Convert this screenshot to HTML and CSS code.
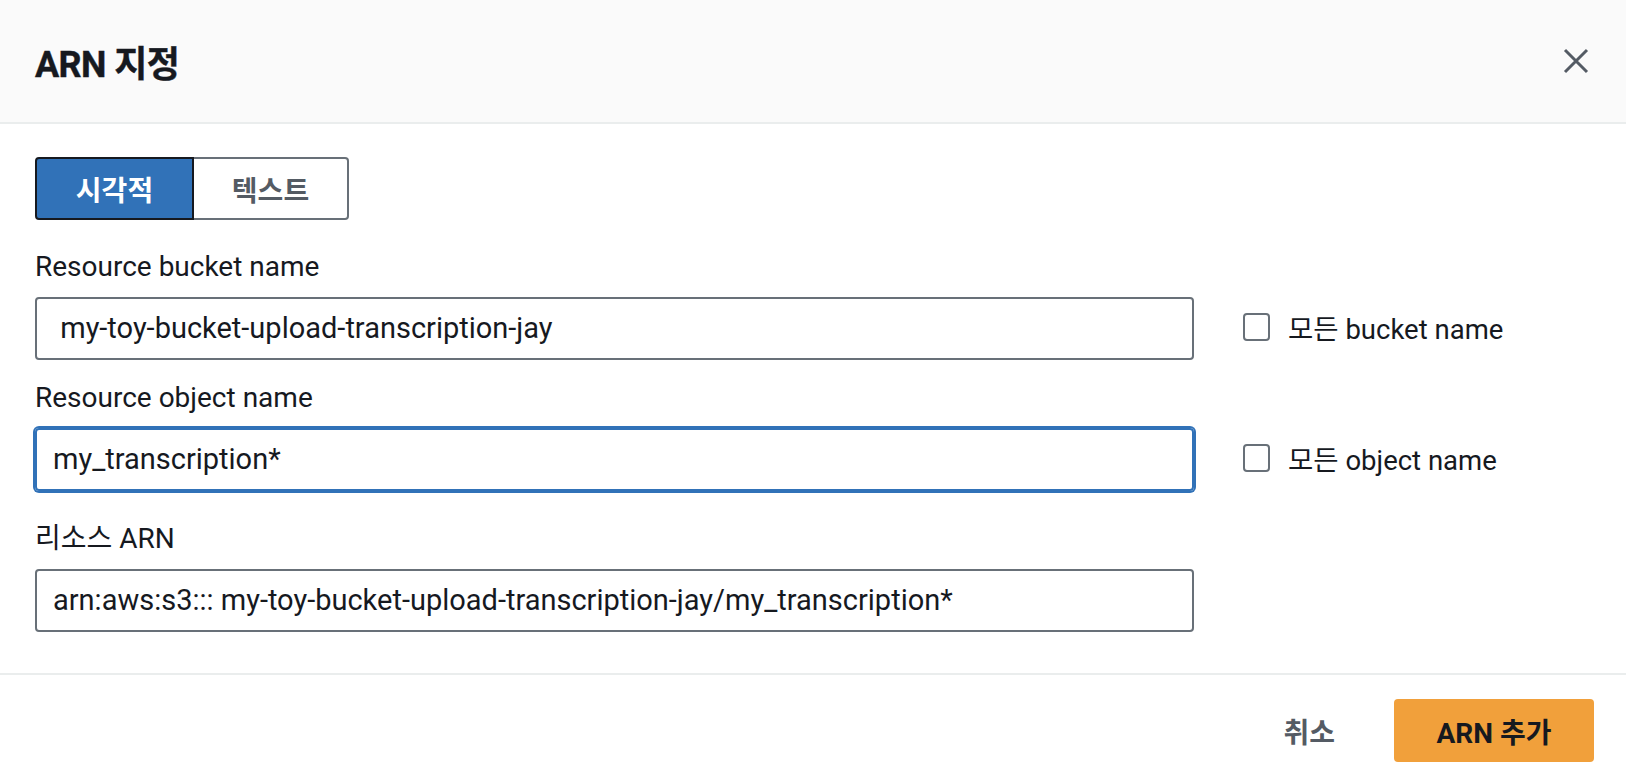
FILE: index.html
```html
<!DOCTYPE html>
<html lang="ko">
<head>
<meta charset="utf-8">
<title>ARN 지정</title>
<link rel="stylesheet" href="styles.css">
</head>
<body>
<div class="modal">
  <header class="hd">
    <h2 class="title">ARN 지정</h2>
    <button class="close" aria-label="닫기">
      <svg width="26" height="26" viewBox="0 0 26 26"><path d="M2 2 L24 24 M24 2 L2 24" stroke="#545b64" stroke-width="3" fill="none"/></svg>
    </button>
  </header>
  <div class="content">
    <div class="seg">
      <button class="seg-btn on">시각적</button>
      <button class="seg-btn off">텍스트</button>
    </div>
    <div class="row first">
      <div class="field">
        <div class="label">Resource bucket name</div>
        <div class="input">&nbsp;my-toy-bucket-upload-transcription-jay</div>
      </div>
      <label class="check"><span class="box"></span><span>모든 bucket name</span></label>
    </div>
    <div class="row second">
      <div class="field">
        <div class="label">Resource object name</div>
        <div class="input focus">my_transcription*</div>
      </div>
      <label class="check"><span class="box"></span><span>모든 object name</span></label>
    </div>
    <div class="row last">
      <div class="field">
        <div class="label">리소스 ARN</div>
        <div class="input">arn:aws:s3::: my-toy-bucket-upload-transcription-jay/my_transcription*</div>
      </div>
    </div>
  </div>
  <footer class="ft">
    <button class="cancel">취소</button>
    <button class="primary">ARN 추가</button>
  </footer>
</div>
</body>
</html>
```

FILE: styles.css
```css
* { box-sizing: border-box; }
html, body { margin: 0; padding: 0; background: #fff; }
body {
  font-family: Roboto, "Noto Sans CJK KR", sans-serif;
  color: #16191f;
  width: 1626px;
  height: 782px;
  overflow: hidden;
}
button { font-family: inherit; border: none; background: none; padding: 0; cursor: pointer; }

.hd {
  height: 124px;
  background: #fafafa;
  border-bottom: 2px solid #eaeded;
  display: flex;
  align-items: center;
  justify-content: space-between;
  padding: 0 37px 0 35px;
}
.title {
  margin: 0;
  font-size: 36px;
  font-weight: 700;
  letter-spacing: -0.6px;
  color: #16191f;
  -webkit-text-stroke: 0.4px #16191f;
}
.close { width: 26px; height: 26px; display: flex; }

.content { padding: 33px 0 0 35px; }

.seg { display: flex; height: 63px; }
.seg-btn {
  height: 63px;
  font-size: 28px;
  font-weight: 700;
  border-radius: 4px;
  border: 2px solid #687078;
}
.seg-btn.on {
  width: 159px;
  background: #3172b8;
  color: #fff;
  border-color: #16191f;
  border-radius: 4px 0 0 4px;
}
.seg-btn.off {
  width: 155px;
  background: #fff;
  color: #545b64;
  border-left: none;
  border-radius: 0 4px 4px 0;
}

.row {
  display: grid;
  grid-template-columns: 1159px 1fr;
  column-gap: 49px;
  align-items: end;
}
.row.first { margin-top: 29px; }
.row.second { margin-top: 20px; }
.row.last { margin-top: 30px; }
.label {
  font-size: 28px;
  line-height: 36px;
  margin-bottom: 12px;
}
.input {
  height: 63px;
  border: 2px solid #687078;
  border-radius: 4px;
  font-size: 29px;
  line-height: 59px;
  padding: 0 16px;
  white-space: nowrap;
  overflow: hidden;
}
.input.focus {
  border-color: #3172b8;
  box-shadow: 0 0 0 2px #3172b8;
}

.check {
  height: 63px;
  display: flex;
  align-items: center;
  gap: 18px;
  font-size: 27.5px;
  padding-bottom: 3px;
}
.box {
  width: 27px;
  height: 28px;
  border: 2px solid #687078;
  border-radius: 4px;
  flex: none;
}

.ft {
  margin-top: 41px;
  border-top: 2px solid #eaeded;
  display: flex;
  justify-content: flex-end;
  align-items: center;
  padding: 24px 32px 20px 0;
}
.cancel {
  font-size: 28px;
  font-weight: 700;
  color: #545b64;
  padding: 0 29px;
  height: 63px;
  margin-right: 30px;
}
.primary {
  width: 200px;
  height: 63px;
  background: #f1a03b;
  border-radius: 4px;
  font-size: 28px;
  font-weight: 700;
  color: #16191f;
}
```
